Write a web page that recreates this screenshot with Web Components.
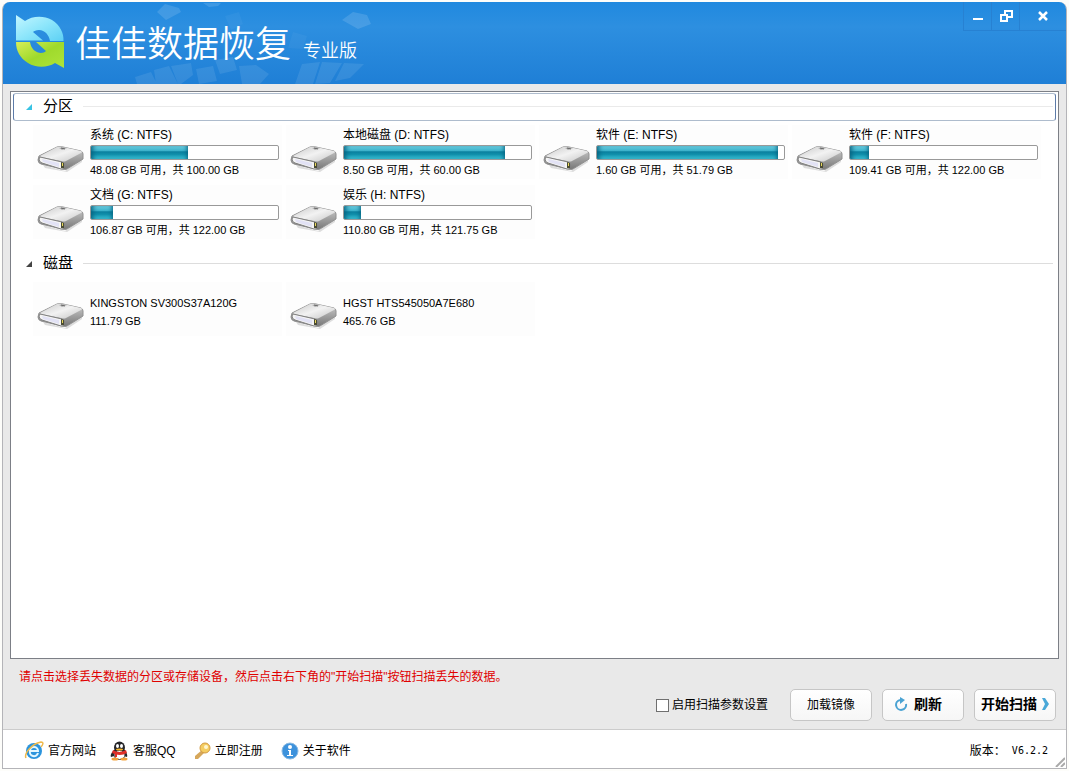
<!DOCTYPE html>
<html lang="zh-CN">
<head>
<meta charset="utf-8">
<title>佳佳数据恢复 专业版</title>
<style>
html, body { height: 100%; margin: 0; }
body { background: #fdfdfa; font: 12px/18px "Liberation Sans", "Noto Sans CJK SC", sans-serif; color: #000; }
</style>
</head>
<body>
<recovery-app></recovery-app>

<script>
const define = (name, html, setup) => {
  const template = document.createElement('template');
  template.innerHTML = html;
  customElements.define(name, class extends HTMLElement {
    connectedCallback() {
      if (this.shadowRoot) return;
      this.attachShadow({ mode: 'open' }).append(template.content.cloneNode(true));
      if (setup) setup(this, this.shadowRoot);
    }
  });
};

define('app-logo', `
<style>:host { display: block; width: 48px; height: 54px; } svg { display: block; }</style>
<svg width="48" height="54" viewBox="0 0 48 54" aria-hidden="true">
  <defs>
    <linearGradient id="b" x1="0" y1="0" x2="1" y2="1"><stop offset="0" stop-color="#c4f6ff"/><stop offset=".5" stop-color="#8de6fb"/><stop offset="1" stop-color="#5cd0f4"/></linearGradient>
    <linearGradient id="g" x1="0" y1="0" x2="1" y2="1"><stop offset="0" stop-color="#d8ee58"/><stop offset=".5" stop-color="#9fda2c"/><stop offset="1" stop-color="#aee43a"/></linearGradient>
  </defs>
  <path fill="url(#b)" d="M0 0 L9 6 C16 1 27 0 36 5 C44 10 48 18 47.500 26 L34 26 C33 20 29 15 23 15 C20 15 18 16 17 17 L27 25.500 L0 25.500Z"/>
  <path fill="url(#g)" d="M48 53 L39 48 C31 53 20 53 12 48 C4 43 0 36 0 27 L14 27 C15 34 20 38 25 38 C27 38 29 37 30 36 L20 27 L48 27Z"/>
</svg>`);

define('window-controls', `
<style>
:host { display: flex; align-self: flex-start; height: 28px; border-left: 1px solid #2781d2; border-bottom: 1px solid #2781d2; }
button { display: grid; place-items: center; margin: 0; padding: 0; border: 0; border-right: 1px solid #2781d2; background: none; width: 28px; }
button:last-child { width: 46px; border: 0; }
</style>
<button aria-label="最小化"><svg width="14" height="14"><path d="M2 10h10" stroke="#fff" stroke-width="2"/></svg></button>
<button aria-label="还原"><svg width="14" height="14" fill="none" stroke="#fff" stroke-width="2"><path d="M6 6V2h7v6H9M2 6h6v6H2z"/></svg></button>
<button aria-label="关闭"><svg width="14" height="14"><path d="M3 3l8 8M11 3l-8 8" stroke="#fff" stroke-width="2.500"/></svg></button>`);

define('title-bar', `
<style>
:host { display: flex; align-items: center; position: relative; height: 82px; padding-left: 13px; box-sizing: border-box; overflow: hidden;
  border-radius: 7px 7px 0 0; color: #fff; background: linear-gradient(#2089df, #2d8fe0 30%, #1f7fd6); }
.decor { position: absolute; left: 0; top: 0; }
app-logo { position: relative; margin-bottom: 2px; }
h1 { position: relative; display: flex; align-items: baseline; gap: 12px; flex: 1; margin: 9px 0 0 11px; font-size: 36px; line-height: 48px; font-weight: 350; }
small { font-size: 18px; font-weight: 350; }
</style>
<svg class="decor" width="400" height="82" fill="#fff" aria-hidden="true">
  <path fill-opacity=".13" d="M162 2l14 4 2 4-15 8-9-8zM200 1l18 0-3 3-9 1zM350 10l14 3 4 9-13 5-16-9z"/>
  <path fill-opacity=".04" d="M222 14l14-4 4 12-12 6zM290 30l14 4-4 13-15-1zM150 32l12 4-3 12-12-4z"/>
  <path fill-opacity=".09" d="M132 75l16-5 6 12h-20zM151 68l15-4 9 18h-22zM168 64l20-3 2 12-12 9h-3zM193 67l17-3 4 15-18 3zM212 58l18-3 4 13-17 4zM236 64l17-1 13 9-9 10h-18zM299 62l18-2-7 22h-18zM319 60l20 1-12 20-15 1zM341 61l20 1-14 14-15 3z"/>
</svg>
<app-logo></app-logo>
<h1>佳佳数据恢复<small>专业版</small></h1>
<window-controls></window-controls>`);

define('drive-icon', `
<style>:host { display: block; width: 48px; height: 28px; } svg { display: block; }</style>
<svg width="48" height="28" viewBox="0 0 48 28" aria-hidden="true">
  <defs>
    <linearGradient id="t" x1="0" y1="0" x2="1" y2="1"><stop offset="0" stop-color="#c8c8c8"/><stop offset=".5" stop-color="#f2f2f2"/><stop offset="1" stop-color="#c6c6c6"/></linearGradient>
    <linearGradient id="s" x1="0" y1="0" x2="0" y2="1"><stop offset="0" stop-color="#d0d0d0"/><stop offset="1" stop-color="#777"/></linearGradient>
  </defs>
  <path d="M6 21l22 6 17-12v3L30 28 8 24z" fill="#ddd"/>
  <path d="M2 12L20 3q3-1 6 0l18 4q2 1 2 3v5L30 25q-2 1-5 0L4 20q-3-1-3-4z" fill="url(#s)" stroke="#909090"/>
  <path d="M3 12L20 3q3-1 6 0l18 4q2 1 0 2L29 17q-2 1-5 0L4 13z" fill="url(#t)"/>
  <path d="M3 13l22 5q2 1 2 3v3q-1 1-3 1L5 19q-3-1-3-4z" fill="#f4f4f4" stroke="#808080"/>
  <path d="M5 15l17 4v4L6 18z" fill="#e2e2f5"/>
  <path d="M24 18l3 1v5l-3 0z" fill="#4b4c35"/><path d="M25.500 19v3" stroke="#e8d65c"/>
  <path d="M22 4l5-1 3 1-5 2z" fill="#b0b0b0"/><path d="M24 4l4 1" stroke="#666"/>
</svg>`);

define('usage-bar', `
<style>
:host { display: block; box-sizing: border-box; height: 15px; border: 1px solid #999; border-radius: 2px; background: #fff; overflow: hidden; }
div { height: 100%; width: var(--used); background: linear-gradient(#6fd0e2, #3db2cb 35%, #0a809e 45%, #108fab 65%, #3cc2d6); box-shadow: inset 5px 0 5px -3px #07617f, inset -4px 0 4px -3px #07617f; }
</style><div></div>`, (el) => {
  el.setAttribute('role', 'progressbar');
  el.setAttribute('aria-valuenow', el.getAttribute('value'));
  el.style.setProperty('--used', el.getAttribute('value') + '%');
});

define('volume-item', `
<style>
:host { display: grid; grid-template-columns: 48px minmax(0, 1fr); column-gap: 5px; align-items: center; height: 54px; padding-left: 4px; background: #fdfdfd; }
drive-icon { margin-top: 12px; }
.body { padding-right: 3px; }
.name { line-height: 18px; margin-bottom: 1px; white-space: nowrap; }
.detail { font-size: 11px; line-height: 18px; margin-top: 1px; white-space: nowrap; }
:host([plain]) .body { padding-top: 6px; }
:host([plain]) .name { font-size: 11px; margin: 0; }
:host([plain]) .detail { margin: 0; }
</style>
<drive-icon></drive-icon>
<div class="body"><div class="name"><slot name="name"></slot></div><slot></slot><div class="detail"><slot name="detail"></slot></div></div>`);

define('volume-group', `
<style>
:host { display: block; }
button { display: flex; align-items: center; gap: 10px; width: 100%; height: 28px; box-sizing: border-box; margin: 0; padding: 0 2px 2px 10px; border: 1px solid transparent; border-radius: 3px; background: none; color: inherit; font: 15px/20px "Liberation Sans", "Noto Sans CJK SC", sans-serif; text-align: left; }
:host([selected]) button { border-color: #aebccd; border-left-color: #5d7ba8; border-right-color: #5d7ba8; }
svg { color: #444; } :host([selected]) svg { color: #39c3e4; }
button::after { content: ""; flex: 1; height: 1px; background: #ddd; }
:host([selected]) button::after { background: #eaeaea; }
.items { display: grid; grid-template-columns: repeat(4, minmax(0, 1fr)); gap: 6px 4px; padding: 4px 15px 0 20px; }
</style>
<button aria-expanded="true"><svg width="9" height="9" aria-hidden="true"><path d="M8 2v6H2z" fill="currentColor"/></svg><slot name="title"></slot></button>
<div class="items"><slot></slot></div>`);

define('action-button', `
<style>
:host { display: block; width: 82px; }
button { display: flex; align-items: center; justify-content: center; gap: 6px; width: 100%; height: 32px; margin: 0; padding: 0; border: 1px solid #c6c6c6; border-radius: 5px; background: linear-gradient(#fff, #f6f6f6); color: #000; font: inherit; }
:host([strong]) button { font-size: 14px; font-weight: 700; padding: 0 10px 2px 0; }
:host([tight]) button { gap: 4px; padding-right: 0; }
</style>
<button><slot></slot></button>`);

define('footer-link', `
<style>
:host { display: block; }
a { display: flex; align-items: center; gap: 4px; color: #000; text-decoration: none; white-space: nowrap; }
</style>
<a href="#"><slot name="icon"></slot><slot></slot></a>`);

define('recovery-app', `
<style>
:host { display: flex; flex-direction: column; box-sizing: border-box; height: 100%; padding: 2px; }
.window { flex: 1; display: flex; flex-direction: column; min-height: 0; border: 1px solid #b4b4b8; border-top: 0; border-radius: 8px 8px 0 0; background: #e9e9e9; }
main { flex: 1; min-height: 0; margin: 7px 7px 0; padding: 1px 2px 2px; border: 1px solid #7c7f86; background: #fff; overflow: hidden; }
volume-group + volume-group { margin-top: 11px; }
.hint { margin: 9px 16px 0; line-height: 18px; color: #e00000; }
.actions { display: flex; align-items: center; justify-content: flex-end; gap: 10px; padding: 3px 10px 8px; }
label { display: flex; align-items: center; gap: 3px; margin-right: 12px; }
input { appearance: none; width: 13px; height: 13px; margin: 0; border: 1px solid #707070; background: #fff; }
footer { display: flex; align-items: center; gap: 18px; height: 39px; padding: 3px 18px 0 21px; box-sizing: border-box; border-top: 1px solid #ccc; background: #fff; position: relative; }
footer-link:first-child { margin-right: -4px; }
.version { margin-left: auto; display: flex; }
.version b { font: 10px/18px "DejaVu Sans Mono", monospace; }
.grip { position: absolute; right: 1px; bottom: 1px; }
</style>
<div class="window">
  <title-bar></title-bar>
  <main>
    <volume-group selected><span slot="title">分区</span>
      <volume-item><span slot="name">系统 (C: NTFS)</span><usage-bar value="52"></usage-bar><span slot="detail">48.08 GB 可用，共 100.00 GB</span></volume-item>
      <volume-item><span slot="name">本地磁盘 (D: NTFS)</span><usage-bar value="86"></usage-bar><span slot="detail">8.50 GB 可用，共 60.00 GB</span></volume-item>
      <volume-item><span slot="name">软件 (E: NTFS)</span><usage-bar value="97"></usage-bar><span slot="detail">1.60 GB 可用，共 51.79 GB</span></volume-item>
      <volume-item><span slot="name">软件 (F: NTFS)</span><usage-bar value="10"></usage-bar><span slot="detail">109.41 GB 可用，共 122.00 GB</span></volume-item>
      <volume-item><span slot="name">文档 (G: NTFS)</span><usage-bar value="12"></usage-bar><span slot="detail">106.87 GB 可用，共 122.00 GB</span></volume-item>
      <volume-item><span slot="name">娱乐 (H: NTFS)</span><usage-bar value="9"></usage-bar><span slot="detail">110.80 GB 可用，共 121.75 GB</span></volume-item>
    </volume-group>
    <volume-group><span slot="title">磁盘</span>
      <volume-item plain><span slot="name">KINGSTON SV300S37A120G</span><span slot="detail">111.79 GB</span></volume-item>
      <volume-item plain><span slot="name">HGST HTS545050A7E680</span><span slot="detail">465.76 GB</span></volume-item>
    </volume-group>
  </main>
  <p class="hint">请点击选择丢失数据的分区或存储设备，然后点击右下角的"开始扫描"按钮扫描丢失的数据。</p>
  <div class="actions">
    <label><input type="checkbox">启用扫描参数设置</label>
    <action-button>加载镜像</action-button>
    <action-button strong><svg width="14" height="14" fill="none" stroke="#4ba3d3" stroke-width="2" aria-hidden="true"><path d="M6 3a5 5 0 1 0 6 4"/><path d="M6 0l5 3-5 4z" fill="#4ba3d3" stroke="none"/></svg>刷新</action-button>
    <action-button strong tight>开始扫描<svg width="8" height="14" aria-hidden="true"><path d="M1 1h3l4 6-4 6H1l3-6z" fill="#4aa8d8"/></svg></action-button>
  </div>
  <footer>
    <footer-link><svg slot="icon" width="20" height="20" viewBox="0 0 20 20" aria-hidden="true">
      <circle cx="10" cy="10" r="8" fill="#2b94dd"/><path d="M6 10h8a4 4 0 0 0-8 0a4 4 0 0 0 8 2" fill="none" stroke="#e3f7ff" stroke-width="2"/><path d="M2 17C0 13 7 3 17 1c3 0 2 3 0 5" fill="none" stroke="#efb94b" stroke-width="1.500"/></svg>官方网站</footer-link>
    <footer-link><svg slot="icon" width="19" height="20" viewBox="0 0 19 20" aria-hidden="true">
      <path d="M4 9C2 11 0 14 1 16l3-1h10l3 1c1-2-1-5-2-7z" fill="#26262a"/><ellipse cx="9.500" cy="6.500" rx="5.500" ry="6" fill="#26262a"/><ellipse cx="9.500" cy="14" rx="5.500" ry="4.500" fill="#fff" stroke="#333"/><path d="M3 9q6 4 13 0l1 3q-7 4-15 0z" fill="#df2f27"/><path d="M5 12h2v4H5z" fill="#df2f27"/><ellipse cx="7.500" cy="5" rx="1.500" ry="2" fill="#fff"/><ellipse cx="11.500" cy="5" rx="1.500" ry="2" fill="#fff"/><ellipse cx="9.500" cy="8.500" rx="3.500" ry="1" fill="#f6b529"/><ellipse cx="5" cy="18" rx="3.500" ry="1.500" fill="#f2a23c"/><ellipse cx="14" cy="18" rx="3.500" ry="1.500" fill="#f2a23c"/></svg>客服QQ</footer-link>
    <footer-link><svg slot="icon" width="17" height="18" viewBox="0 0 17 18" aria-hidden="true">
      <path d="M8 8l3 2-7 7H1v-3z" fill="#d6a75b"/><circle cx="11" cy="6" r="5" fill="#f4cd62" stroke="#d39a41"/><circle cx="12" cy="5" r="2" fill="#fff6d0"/></svg>立即注册</footer-link>
    <footer-link><svg slot="icon" width="18" height="18" viewBox="0 0 18 18" aria-hidden="true">
      <circle cx="9" cy="9" r="8" fill="#3d92dc" stroke="#8ab9e2"/><circle cx="9" cy="5" r="2" fill="#fff"/><path d="M7 8h3v5h2v1H6v-1h2V9H7z" fill="#fff"/></svg>关于软件</footer-link>
    <span class="version">版本：<b>&nbsp;V6.2.2</b></span>
    <svg class="grip" width="10" height="10" stroke="#aaa" stroke-width="2" aria-hidden="true"><path d="M1 10l9-9M6 10l4-4"/></svg>
  </footer>
</div>`);
</script>
</body>
</html>
